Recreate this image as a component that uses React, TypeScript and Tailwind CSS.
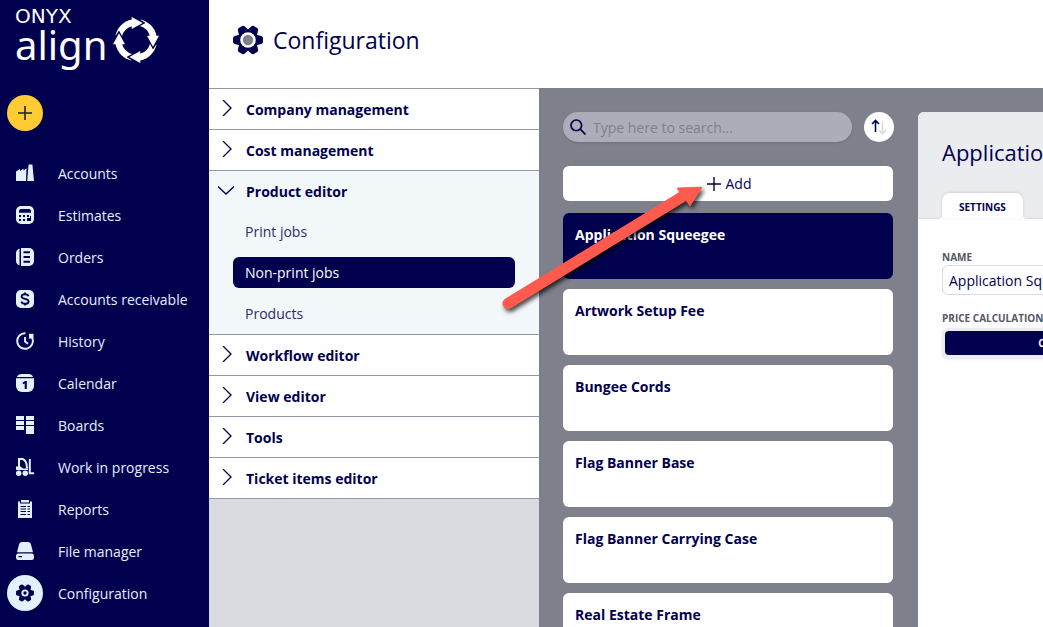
import { useState } from 'react';
import type { ReactNode } from 'react';

const navItems: { label: string; icon: ReactNode }[] = [
  {
    label: 'Accounts',
    icon: <path d="M0 17V7.500L4 5V7L7.500 4.500V6.500L10.500 4.200 10 17ZM11.200 17l1.400-16.500h3.800L18 17Z" />,
  },
  {
    label: 'Estimates',
    icon: (
      <path
        fillRule="evenodd"
        d="M5 0h8a5 5 0 0 1 5 5v8a5 5 0 0 1-5 5H5a5 5 0 0 1-5-5V5a5 5 0 0 1 5-5ZM5 3a2 2 0 0 0-2 2v1.800h12V5a2 2 0 0 0-2-2ZM3 9h2v2H3ZM7 9h2v2H7ZM11 9h2v2h-2ZM3 13h2v2H3ZM7 13h2v2H7ZM14 10h1v5h-4v-3h3Z"
      />
    ),
  },
  {
    label: 'Orders',
    icon: (
      <>
        <path d="M3.500 0.600v16.800C1.500 16.800 0 15 0 13V5C0 3 1.500 1.200 3.500.6Z" />
        <path
          fillRule="evenodd"
          d="M5 0h8a5 5 0 0 1 5 5v8a5 5 0 0 1-5 5H5ZM7.500 3.200h6.500v2H7.500ZM7.500 8h6.500v2H7.500ZM7.500 12.800h6.500v2H7.500Z"
        />
      </>
    ),
  },
  {
    label: 'Accounts receivable',
    icon: (
      <>
        <rect width="18" height="18" rx="5" />
        <path
          d="M12.500 6.200C12 4.800 10.700 4.200 9 4.200c-2 0-3.400.9-3.400 2.300 0 3.200 7 1.500 7 4.900 0 1.500-1.500 2.400-3.600 2.400-2 0-3.300-.8-3.700-2.200M9 2.500v2M9 13.500v2"
          fill="none"
          stroke="#00004f"
          strokeWidth="1.900"
        />
      </>
    ),
  },
  {
    label: 'History',
    icon: (
      <>
        <path d="M9.500 1.200a7.800 7.800 0 1 0 6.300 3.900M9 5v4.500l3 2.300" fill="none" stroke="currentColor" strokeWidth="1.900" />
        <path d="M13 1.800h4.500V6.500H13Z" />
      </>
    ),
  },
  {
    label: 'Calendar',
    icon: (
      <>
        <path d="M.9 3C1.700 1.200 3.400 0 5.500 0h7c2.100 0 3.800 1.200 4.600 3Z" />
        <path d="M0 4.200h18V12a6 6 0 0 1-6 6H6a6 6 0 0 1-6-6Z" />
        <path d="M6.500 8.800 9 7h1.800v8H8.700V9.400L7.200 10.300Z" fill="#00004f" />
      </>
    ),
  },
  {
    label: 'Boards',
    icon: (
      <path d="M0 0h8v4H0ZM0 5h8v4H0ZM0 10h8v4H0ZM10 0h8v4h-8ZM10 5h8v4h-8ZM10 10h8v8h-8Z" />
    ),
  },
  {
    label: 'Work in progress',
    icon: (
      <>
        <path d="M3 10V1h3.500C9.500 1.800 11 5 11 10.500M13.800 1v14.200H18" fill="none" stroke="currentColor" strokeWidth="2" />
        <path d="M0 8.500h4.500L7 10.500h5V12H0Z" />
        <circle cx="2.700" cy="15.300" r="2.700" />
        <circle cx="9.300" cy="15.300" r="2.700" />
      </>
    ),
  },
  {
    label: 'Reports',
    icon: (
      <>
        <path d="M5 0h8v2.500H5ZM2 1.500h2v2h10v-2h2V18H2Z" />
        <path
          d="M4.500 6.500h5.500M11.500 6.500h2.500M4.500 9h5.500M11.500 9h2.500M4.500 11.500h5.500M11.500 11.500h2.500M4.500 14.500h5.500M11.500 14.500h2.500"
          stroke="#00004f"
        />
      </>
    ),
  },
  {
    label: 'File manager',
    icon: (
      <>
        <path d="M1 10.300 3 2.500C3.400 1 4.400 0 6 0h6c1.600 0 2.600 1 3 2.500l2 7.800Z" />
        <path
          fillRule="evenodd"
          d="M2.500 11.500h13A2.500 2.500 0 0 1 18 14v1.500a2.500 2.500 0 0 1-2.500 2.500h-13A2.500 2.500 0 0 1 0 15.500V14a2.500 2.500 0 0 1 2.500-2.500ZM2.500 14v1.300H6V14Z"
        />
      </>
    ),
  },
];

const sections = [
  { title: 'Company management', children: [] },
  { title: 'Cost management', children: [] },
  { title: 'Product editor', children: ['Print jobs', 'Non-print jobs', 'Products'] },
  { title: 'Workflow editor', children: [] },
  { title: 'View editor', children: [] },
  { title: 'Tools', children: [] },
  { title: 'Ticket items editor', children: [] },
];

const jobs = [
  'Application Squeegee',
  'Artwork Setup Fee',
  'Bungee Cords',
  'Flag Banner Base',
  'Flag Banner Carrying Case',
  'Real Estate Frame',
];

const gearAngles = [0, 60, 120, 180, 240, 300];
const arrowAngles = [0, 90, 180, 270];

type GearProps = { className: string; ring: string; ringRadius: number; hub: string; hubRadius: number };

function Gear({ className, ring, ringRadius, hub, hubRadius }: GearProps) {
  return (
    <svg viewBox="-15 -15 30 30" className={className} aria-hidden="true">
      {gearAngles.map((angle) => (
        <path
          key={angle}
          d="M8-5.500 13.200-4Q15-3.500 15-2V2Q15 3.500 13.200 4L8 5.500Z"
          fill="currentColor"
          transform={`rotate(${angle})`}
        />
      ))}
      <circle r="10.600" fill="currentColor" />
      <circle r={ringRadius} fill={ring} />
      <circle r={hubRadius} fill={hub} />
    </svg>
  );
}

function Logo() {
  return (
    <div className="flex items-end gap-1.5 pl-[15px] pt-1.5 text-white">
      <div>
        <div className="font-['DejaVu_Sans',sans-serif] text-xl leading-5">ONYX</div>
        <div className="font-['Noto_Sans',sans-serif] text-[40px] leading-[37px]">align</div>
      </div>
      <svg viewBox="-23 -23 46 46" className="h-[46px] w-[46px]" fill="currentColor" aria-hidden="true">
        {arrowAngles.map((angle) => (
          <path
            key={angle}
            d="M-20.600-4A21 21 0 0 1-4.300-20.500V-23L6.700-17-4.300-11V-13.800A14.500 14.500 0 0 0-14-4L-17-9.500Z"
            transform={`rotate(${angle})`}
          />
        ))}
      </svg>
    </div>
  );
}

function Chevron({ open }: { open: boolean }) {
  return (
    <svg viewBox="0 0 16 16" className="-mt-1 h-4 w-4" fill="none" stroke="currentColor" strokeWidth="1.300" aria-hidden="true">
      <path d={open ? 'M0 4.500 8 12l8-7.500' : 'M5 0l8 8-8 8'} />
    </svg>
  );
}

export default function App() {
  const [search, setSearch] = useState('');
  const [name, setName] = useState('Application Squeegee');
  const [section, setSection] = useState('Product editor');
  const [job, setJob] = useState('Application Squeegee');

  return (
    <div className="relative flex h-screen overflow-hidden bg-white font-['Open_Sans','Noto_Sans',sans-serif] text-sm text-[#00004f]">
      {/* Sidebar */}
      <aside className="w-[209px] shrink-0 bg-[#00004f] text-[#e3f1ff]">
        <div className="h-[95px]">
          <Logo />
        </div>
        <button
          aria-label="Create new"
          className="ml-[7px] flex h-9 w-9 items-center justify-center rounded-full bg-[#ffcb33] text-[#1d1d45]"
        >
          <svg viewBox="0 0 14 14" className="h-3.5 w-3.5" stroke="currentColor" strokeWidth="1.600">
            <path d="M7 0v14M0 7h14" />
          </svg>
        </button>
        <nav className="mt-[21px] flex flex-col">
          {navItems.map((item) => (
            <a key={item.label} href="#" className="flex h-[42px] items-center gap-[15px] pl-[7px]">
              <span className="flex w-9 justify-center">
                <svg viewBox="0 0 18 18" className="h-[18px] w-[18px]" fill="currentColor" aria-hidden="true">
                  {item.icon}
                </svg>
              </span>
              <span className="pt-0.5">{item.label}</span>
            </a>
          ))}
          <a href="#" className="flex h-[42px] items-center gap-[15px] pl-[7px]">
            <span className="flex h-9 w-9 items-center justify-center rounded-full bg-[#e3f1ff] text-[#00004f]">
              <Gear className="h-[18px] w-[18px]" ring="#e3f1ff" ringRadius={6} hub="#00004f" hubRadius={2.8} />
            </span>
            <span className="pt-0.5">Configuration</span>
          </a>
        </nav>
      </aside>

      <main className="flex min-w-0 flex-1 flex-col">
        <header className="flex h-[88px] shrink-0 items-center gap-2.5 px-6 pb-2">
          <Gear className="h-[30px] w-[30px]" ring="#ffffff" ringRadius={7.8} hub="#7e808c" hubRadius={5.2} />
          <h1 className="text-[23px] font-medium">Configuration</h1>
        </header>

        <div className="flex min-h-0 flex-1">
          {/* Section menu */}
          <div className="w-[330px] shrink-0 border-t border-[#9496a6] bg-[#dadbe0]">
            {sections.map((s) => {
              const open = s.title === section;
              return (
                <div key={s.title} className={`border-b border-[#9496a6] ${open ? 'bg-[#f2f7fa]' : 'bg-white'}`}>
                  <button
                    onClick={() => setSection(s.title)}
                    className="flex h-10 w-full items-center gap-3 pl-[9px] pt-0.5 text-left font-bold"
                  >
                    <Chevron open={open} />
                    {s.title}
                  </button>
                  {open && s.children.length > 0 && (
                    <div className="flex flex-col gap-2.5 px-6 pb-[5px] pt-[5px]">
                      {s.children.map((child) => (
                        <a
                          key={child}
                          href="#"
                          className={`flex h-[31px] items-center rounded-md px-3 ${
                            child === 'Non-print jobs' ? 'bg-[#00004f] text-white' : 'text-[#2d2d68]'
                          }`}
                        >
                          {child}
                        </a>
                      ))}
                    </div>
                  )}
                </div>
              );
            })}
          </div>

          <div className="flex min-w-0 flex-1 gap-6 overflow-hidden bg-[#7e808c] pl-6 pt-6">
            {/* Job list */}
            <div className="w-[331px] shrink-0">
              <div className="flex gap-3">
                <label className="flex h-[30px] flex-1 items-center gap-[7px] rounded-full bg-[#adadba] pl-[7px] pr-3 shadow-sm">
                  <svg viewBox="0 0 16 16" className="h-4 w-4" fill="none" stroke="currentColor" strokeWidth="1.700" aria-hidden="true">
                    <circle cx="6.300" cy="6.300" r="5.300" />
                    <path d="m10.200 10.200 5.300 5.300" />
                  </svg>
                  <input
                    type="search"
                    aria-label="Search"
                    placeholder="Type here to search..."
                    value={search}
                    onChange={(e) => setSearch(e.target.value)}
                    className="min-w-0 flex-1 bg-transparent pt-px outline-none placeholder:text-[#7e808c]"
                  />
                </label>
                <button aria-label="Sort" className="flex h-[30px] w-[30px] items-center justify-center rounded-full bg-white">
                  <svg viewBox="0 0 16 16" className="h-4 w-4" fill="none" strokeWidth="1.600">
                    <path d="M4.500 13V1.500M1 5l3.500-3.500L8 5" stroke="#00004f" />
                    <path d="M11.500 3v11.500M8 11l3.500 3.500L15 11" stroke="#dadbe0" />
                  </svg>
                </button>
              </div>

              <div className="flex flex-col pr-px">
                <button className="mt-6 flex h-[35px] items-center justify-center gap-[5px] rounded-md bg-white pl-0.5 font-medium">
                  <svg viewBox="0 0 14 14" className="h-3.5 w-3.5" stroke="currentColor" strokeWidth="1.400" aria-hidden="true">
                    <path d="M7 0v14M0 7h14" />
                  </svg>
                  Add
                </button>

                <div className="mt-3 flex flex-col gap-2.5">
                  {jobs.map((j) => (
                    <button
                      key={j}
                      onClick={() => setJob(j)}
                      className={`flex h-[66px] items-start rounded-md p-3 text-left font-bold ${
                        j === job ? 'bg-[#00004f] text-white' : 'bg-white'
                      }`}
                    >
                      {j}
                    </button>
                  ))}
                </div>
              </div>
            </div>

            {/* Detail panel */}
            <section className="min-w-[242px] flex-1 rounded-tl-md bg-white">
              <div className="flex h-[107px] flex-col justify-between rounded-tl-md bg-[#ebecf0] pl-6 pt-6 shadow-[inset_0_-1px_2px_#dadbe0]">
                <h2 className="whitespace-nowrap text-[22px] leading-8">{job}</h2>
                <div role="tablist">
                  <button
                    role="tab"
                    aria-selected="true"
                    className="relative flex h-[26px] items-center rounded-t-lg bg-white px-[17px] pt-0.5 text-[10px] font-bold shadow-[0_-1px_3px_#d0d1d8] before:absolute before:bottom-0 before:-left-1 before:h-1 before:w-1 before:bg-[radial-gradient(circle_at_0_0,transparent_4px,white_4px)] after:absolute after:-right-1 after:bottom-0 after:h-1 after:w-1 after:bg-[radial-gradient(circle_at_100%_0,transparent_4px,white_4px)]"
                  >
                    SETTINGS
                  </button>
                </div>
              </div>
              <div className="flex flex-col bg-white pl-6 pt-[30px]">
                <label htmlFor="job-name" className="text-[10px] font-bold leading-4 text-[#555763]">
                  NAME
                </label>
                <input
                  id="job-name"
                  value={name}
                  onChange={(e) => setName(e.target.value)}
                  className="h-[30px] rounded-md border border-[#dadbe0] px-1.5 outline-none"
                />
                <span className="mt-[15px] whitespace-nowrap text-[10px] font-bold leading-4 text-[#555763]">
                  PRICE CALCULATION
                </span>
                <div className="mt-[2px] rounded-md bg-[#ebecf0] p-[3px] shadow-sm">
                  <button className="h-6 w-full rounded-sm bg-[#00004f] text-[10px] font-bold text-white">COST</button>
                </div>
              </div>
            </section>
          </div>
        </div>
      </main>

      {/* Pointer to the Add button */}
      <svg
        viewBox="0 0 214 134"
        className="pointer-events-none absolute left-[498px] top-[180px] h-[134px] w-[214px] drop-shadow-[2px_3px_2px_rgba(0,0,0,0.7)]"
        aria-hidden="true"
      >
        <path
          d="M10 123.500 188 14.500"
          stroke="#ff5a4d"
          strokeWidth="11"
          strokeLinecap="round"
        />
        <path d="M180 8.500 203 7.800 192 25Z" fill="#ff5a4d" stroke="#ff5a4d" strokeWidth="2" strokeLinejoin="round" />
      </svg>
    </div>
  );
}
